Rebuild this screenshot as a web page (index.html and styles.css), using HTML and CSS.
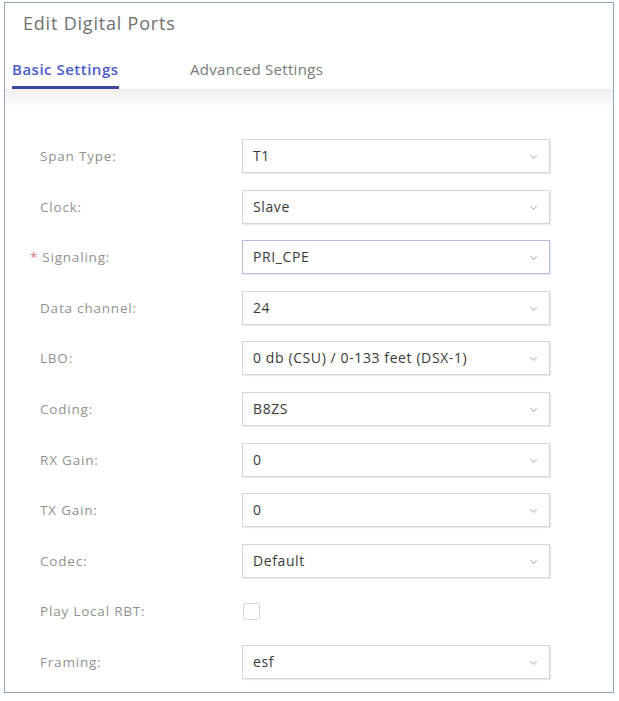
FILE: index.html
```html
<!DOCTYPE html>
<html lang="en">
<head>
    <meta charset="UTF-8">
    <meta name="viewport" content="width=device-width, initial-scale=1.0">
    <title>Edit Digital Ports</title>
    <link rel="stylesheet" href="styles.css">
</head>
<body>
    <div class="dialog">
        <h2 class="title">Edit Digital Ports</h2>
        <div class="tabs">
            <span class="tab active">Basic Settings</span>
            <span class="tab">Advanced Settings</span>
        </div>
        <div class="band"></div>
        <div class="form">
            <div class="row">
                <label>Span Type:</label>
                <div class="select">T1<span class="arrow"></span></div>
            </div>
            <div class="row">
                <label>Clock:</label>
                <div class="select">Slave<span class="arrow"></span></div>
            </div>
            <div class="row">
                <label class="req"><span class="star">*</span>Signaling:</label>
                <div class="select focus">PRI_CPE<span class="arrow"></span></div>
            </div>
            <div class="row">
                <label>Data channel:</label>
                <div class="select">24<span class="arrow"></span></div>
            </div>
            <div class="row">
                <label>LBO:</label>
                <div class="select">0 db (CSU) / 0-133 feet (DSX-1)<span class="arrow"></span></div>
            </div>
            <div class="row">
                <label>Coding:</label>
                <div class="select">B8ZS<span class="arrow"></span></div>
            </div>
            <div class="row">
                <label>RX Gain:</label>
                <div class="select">0<span class="arrow"></span></div>
            </div>
            <div class="row">
                <label>TX Gain:</label>
                <div class="select">0<span class="arrow"></span></div>
            </div>
            <div class="row">
                <label>Codec:</label>
                <div class="select">Default<span class="arrow"></span></div>
            </div>
            <div class="row">
                <label>Play Local RBT:</label>
                <div class="check"></div>
            </div>
            <div class="row">
                <label>Framing:</label>
                <div class="select">esf<span class="arrow"></span></div>
            </div>
        </div>
    </div>
</body>
</html>
```

FILE: styles.css
```css
body {margin:0; font-family:"Open Sans", "Liberation Sans", sans-serif; background:#fff;}
.dialog {margin:2px 5px 0 4px; height:691px; border:1px solid #8fa8c4; box-sizing:border-box;}
.title {margin:0; padding:8px 0 0 18px; height:44px; box-sizing:border-box; font-size:18px; font-weight:normal; letter-spacing:0.8px; color:#707070;}
.tabs {display:flex; height:42px; padding-left:7px;}
.tab {font-size:15px; letter-spacing:0.3px; color:#7a7a7a; padding-top:11px; line-height:22px; margin-right:71px;}
.tab.active {color:#4c5bd0; font-weight:600; letter-spacing:0.5px; border-bottom:3px solid #3b4a9e; width:107px; height:42px; box-sizing:border-box;}
.band {height:18px; background:linear-gradient(#f0f0f0, #f6f6f6 60%, #fff);}
.form {padding:32px 0 0 35px;}
.row {display:flex; align-items:center; height:34px; margin-bottom:16.6px;}
.row label {width:202px; font-size:13.5px; letter-spacing:0.8px; color:#929292;}
.row label.req {margin-left:-10px; width:212px;}
.star {color:#e57373; margin-right:4px;}
.select {position:relative; width:308px; height:34px; box-sizing:border-box; border:1px solid #d6d6d6; padding-left:10px; line-height:32px; font-size:14px; letter-spacing:0.6px; color:#3a3a3a; box-shadow:1px 1px 1px rgba(0,0,0,0.08);}
.select.focus {border-color:#b4bde6;}
.arrow {position:absolute; right:13px; top:13px; width:4px; height:4px; border-right:1px solid #bbb; border-bottom:1px solid #bbb; transform:rotate(45deg);}
.check {width:17px; height:17px; margin-left:1px; border:1px solid #d6d6d6; border-radius:2px; box-sizing:border-box;}
```
